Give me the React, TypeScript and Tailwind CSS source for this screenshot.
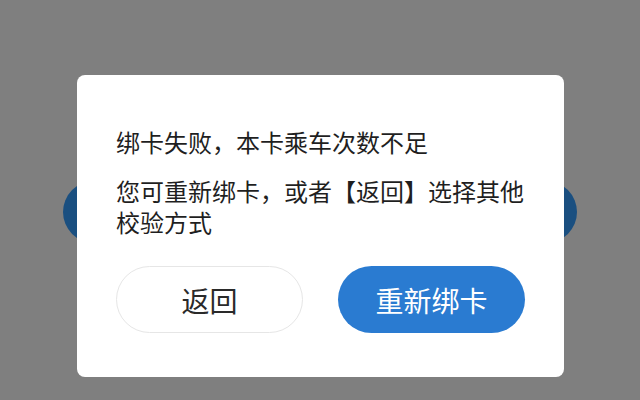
import React from "react";

export default function App() {
  return (
    <div
      className="relative w-[640px] h-[400px] overflow-hidden bg-[#7f7f7f]"
      style={{ fontFamily: '"Noto Sans CJK SC", "Noto Sans", sans-serif' }}
    >
      <div className="absolute left-[63px] top-[181px] w-[514px] h-[62px] rounded-full bg-[#1a4f80]" />
      <div className="absolute left-[77px] top-[75px] w-[487px] h-[302px] rounded-[8px] bg-white px-[39px] pt-[51px]">
        <p className="text-[24px] leading-[31px] text-[#1f1f1f]">绑卡失败，本卡乘车次数不足</p>
        <p className="mt-[18px] text-[24px] leading-[31px] text-[#1f1f1f]">
          您可重新绑卡，或者【返回】选择其他校验方式
        </p>
        <div className="mt-[29px] flex gap-[35px]">
          <button className="flex h-[67px] w-[187px] items-center justify-center rounded-full border border-[#e6e6e6] bg-white text-[28px] text-[#2a2a2a]">
            返回
          </button>
          <button className="flex h-[67px] w-[187px] items-center justify-center rounded-full bg-[#2a7bd1] text-[28px] text-white">
            重新绑卡
          </button>
        </div>
      </div>
    </div>
  );
}
